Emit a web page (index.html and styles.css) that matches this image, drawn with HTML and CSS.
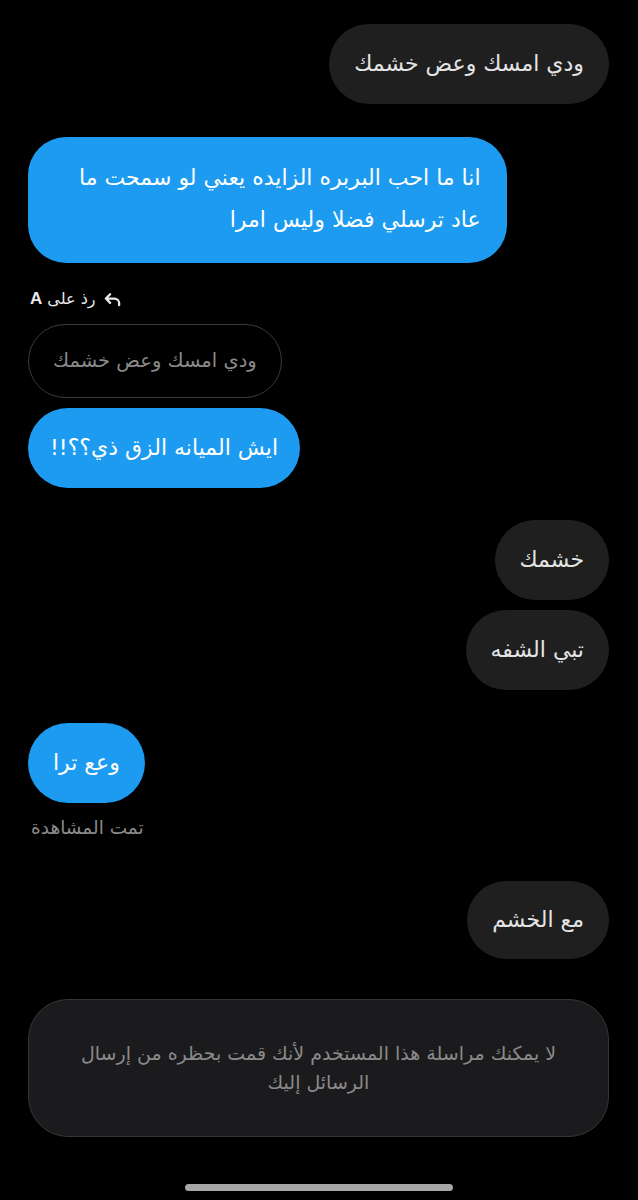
FILE: index.html
```html
<!DOCTYPE html>
<html lang="ar">
<head>
<meta charset="utf-8">
<link rel="stylesheet" href="styles.css">
</head>
<body>
<div class="screen">
  <div class="thread">
    <div class="bubble dark right b1" dir="rtl">ودي امسك وعض خشمك</div>
    <div class="bubble blue left b2" dir="rtl">انا ما احب البربره الزايده يعني لو سمحت ما<br>عاد ترسلي فضلا وليس امرا</div>
    <div class="reply-label" dir="rtl">
      <svg class="reply-icon" viewBox="0 0 20 20" width="19" height="19"><path d="M7.5 4.5 3 9l4.5 4.5M3.5 9H12a5 5 0 0 1 5 5v2" fill="none" stroke="#e7e9ea" stroke-width="2.4" stroke-linecap="round" stroke-linejoin="round"/></svg>
      <span>رذ على <b>A</b></span>
    </div>
    <div class="bubble quote left" dir="rtl">ودي امسك وعض خشمك</div>
    <div class="bubble blue left b3" dir="rtl">ايش الميانه الزق ذي؟؟!!</div>
    <div class="bubble dark right b4" dir="rtl">خشمك</div>
    <div class="bubble dark right b5" dir="rtl">تبي الشفه</div>
    <div class="bubble blue left b6" dir="rtl">وعع ترا</div>
    <div class="seen" dir="rtl">تمت المشاهدة</div>
    <div class="bubble dark right b7" dir="rtl">مع الخشم</div>
  </div>
  <div class="blocked" dir="rtl">لا يمكنك مراسلة هذا المستخدم لأنك قمت بحظره من إرسال الرسائل إليك</div>
  <div class="home-bar"></div>
</div>
</body>
</html>
```
FILE: styles.css
```css
html, body {
  margin: 0;
  padding: 0;
  background: #000;
}
body {
  font-family: "DejaVu Sans", "Noto Sans", sans-serif;
  color: #e7e9ea;
}
.screen {
  width: 638px;
  height: 1200px;
  box-sizing: border-box;
  padding: 24px 29px 0 28px;
  display: flex;
  flex-direction: column;
  overflow: hidden;
}
.thread {
  display: flex;
  flex-direction: column;
}
.bubble {
  box-sizing: border-box;
  font-size: 22px;
  line-height: 40px;
  padding: 20px 25px;
  border-radius: 40px;
  max-width: 482px;
  text-align: right;
}
.right { align-self: flex-end; }
.left { align-self: flex-start; }
.dark {
  background: #1f1f1f;
  color: #e4e4e4;
}
.blue {
  background: #1d9bf0;
  color: #fff;
}
.b2 {
  margin-top: 33px;
  max-width: 490px;
  padding: 20px 26px 22px 51px;
  border-radius: 38px;
  line-height: 42px;
}
.reply-label {
  align-self: flex-start;
  display: flex;
  align-items: center;
  gap: 8px;
  margin-top: 26px;
  margin-left: 2px;
  font-size: 16px;
  line-height: 20px;
  color: #e7e9ea;
}
.reply-label b {
  font-family: "Liberation Sans", sans-serif;
  font-size: 17px;
}
.reply-icon { display: block; }
.quote {
  margin-top: 15px;
  border: 1px solid #3a3a3a;
  color: #8a8a8a;
  font-size: 19.5px;
  padding: 16px 24px;
  border-radius: 38px;
}
.b3 { margin-top: 10px; padding: 20px 22px; }
.b4 { margin-top: 32px; }
.b5 { margin-top: 10px; }
.b6 { margin-top: 33px; }
.seen {
  align-self: flex-start;
  margin-top: 14px;
  margin-left: 3px;
  font-size: 18.5px;
  line-height: 22px;
  color: #8a8a8a;
}
.b7 {
  margin-top: 42px;
  padding: 19px 25px;
}
.blocked {
  margin-top: 40px;
  height: 138px;
  box-sizing: border-box;
  background: #1b1b1d;
  border: 1px solid #363638;
  border-radius: 40px;
  display: flex;
  align-items: center;
  justify-content: center;
  text-align: center;
  padding: 0 40px;
  font-size: 19px;
  line-height: 29px;
  color: #8a8a8a;
}
.home-bar {
  align-self: center;
  margin-top: 47px;
  margin-right: -1px;
  width: 268px;
  height: 7px;
  border-radius: 4px;
  background: #a6a6a6;
}
```
